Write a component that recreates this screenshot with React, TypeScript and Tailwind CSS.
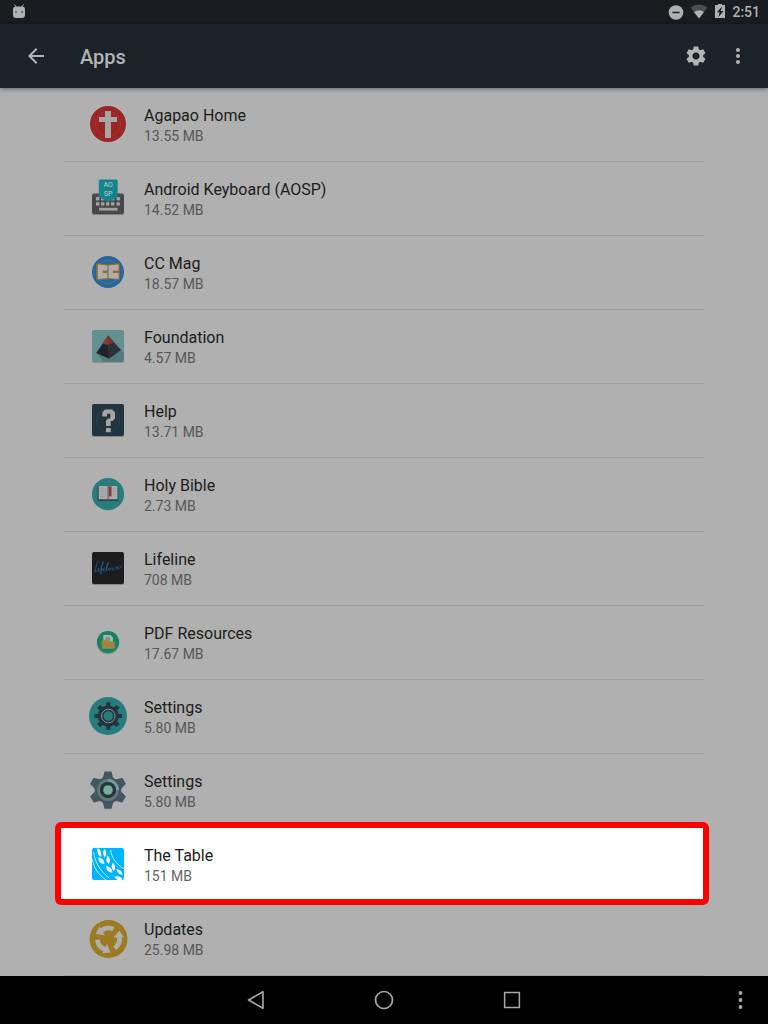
import type { ReactNode } from "react";
import { MdArrowBack, MdMoreVert, MdSettings } from "react-icons/md";

function Icon({ children }: { children: ReactNode }) {
  return (
    <svg viewBox="0 0 40 40" className="size-10 shrink-0" aria-hidden="true">
      {children}
    </svg>
  );
}

const CrossIcon = (
  <Icon>
    <circle cx="20" cy="20" r="18" fill="#992526" />
    <circle cx="20" cy="20" r="12.5" fill="none" stroke="#a53d3d" strokeWidth=".6" />
    <path d="M17 7h6v6h6v5h-6v16h-6V18h-6v-5h6z" fill="#aaa5a5" />
  </Icon>
);

const KeyboardIcon = (
  <Icon>
    <rect x="4" y="16" width="32" height="21" rx="2" fill="#7f7f7f" />
    <rect x="4" y="15.5" width="32" height="20.5" rx="2" fill="#484848" />
    {[8, 13, 18, 23, 28.5].map((x) => (
      <g key={x} fill="#a0a0a0">
        <rect x={x} y="19" width="3.4" height="3.4" />
        <rect x={x} y="24.2" width="3.4" height="3.4" />
      </g>
    ))}
    <rect x="11" y="29.8" width="18.6" height="2.8" fill="#a0a0a0" />
    <path d="M10.8 3q0-1.500 1.500-1.500h15.900q1.500 0 1.500 1.500v16L20.200 24l-9.400-5z" fill="#12848b" />
    <text x="20.2" y="8.500" textAnchor="middle" fontSize="7" fontWeight="500" fontFamily="Roboto, sans-serif" fill="#a5c3c5">AO</text>
    <text x="20.2" y="17.500" textAnchor="middle" fontSize="7" fontWeight="500" fontFamily="Roboto, sans-serif" fill="#a5c3c5">SP</text>
  </Icon>
);

const MagIcon = (
  <Icon>
    <circle cx="20" cy="20" r="16" fill="#28659a" />
    <circle cx="20" cy="20" r="11.500" fill="none" stroke="#4c7ba4" strokeWidth=".7" />
    <path d="M8.500 11l11.500 1.500L31.700 11v16.700L20 27.200 8.500 28.500z" fill="#9a6a2a" />
    <path d="M9.800 12.500l9.700 1v12.400l-9.700 1zM20.500 13.500l10-1v14.400l-10-1z" fill="#b0aeab" />
    <path d="M14.800 18.500h5v2.500h-5zM24.800 18.500h6v2.500h-6z" fill="#9a6a2a" />
    <path d="M20 13v13.500" stroke="#837d76" strokeWidth=".8" />
  </Icon>
);

const FoundationIcon = (
  <Icon>
    <rect x="4" y="5" width="32" height="32" rx="2" fill="#8c9494" />
    <rect x="4" y="4" width="32" height="32" rx="2" fill="#649092" />
    <path d="M8.500 27L16 36h18q2 0 2-2v-7l-3-3z" fill="#527b7d" />
    <path d="M20 9.500L8.300 27l13 5.800z" fill="#20232c" />
    <path d="M20 9.500L33 24l-11.700 8.800z" fill="#30303b" />
    <path d="M20 9.500L15 17.400l2.200 1.200 3.300.5z" fill="#91382e" />
    <path d="M20 9.500l.6 9.600 2.100-1 3.600-1.500z" fill="#7b3028" />
  </Icon>
);

const HelpIcon = (
  <Icon>
    <rect x="4" y="5" width="32" height="32" rx="2" fill="#858789" />
    <rect x="4" y="4" width="32" height="32" rx="2" fill="#223440" />
    <circle cx="20" cy="20.500" r="11.500" fill="none" stroke="#304650" strokeWidth=".7" />
    <path
      d="M14.300 15.500v-3l2.800-3h7l2.900 3v6l-2.500 2.500h-1.800v5H18v-5.500l2-2h2.300v-4.700h-3.200v2.700h-4.800zM18 28h4.700v4.300H18z"
      fill="#a7a6a2"
    />
  </Icon>
);

const BibleIcon = (
  <Icon>
    <circle cx="20" cy="20.500" r="16" fill="#7b9491" />
    <circle cx="20" cy="20" r="16" fill="#267d7c" />
    <rect x="9.600" y="12" width="20.700" height="15" rx=".7" fill="#344448" />
    <path d="M10.700 12h9v13.300h-9zM20.500 12h9v13.300h-9z" fill="#aaabaa" />
    <path d="M12.500 15h5.500M12.500 17.500h5.500M12.500 20h5.500M12.500 22.500h5.500M24.500 15h3.500M24.500 17.500h3.500M24.500 20h3.500" stroke="#969d9c" strokeWidth=".8" />
    <path d="M20.100 12v14" stroke="#747c7b" strokeWidth=".6" />
    <path d="M21 12.200h2.500V23l-1.200-1.200L21 23z" fill="#943a34" />
  </Icon>
);

const LifelineIcon = (
  <Icon>
    <rect x="4" y="5" width="32" height="32" rx="2" fill="#858585" />
    <rect x="4" y="4" width="32" height="32" rx="2" fill="#1c1d1f" />
    <path
      d="M10 13.500C8.500 15.500 7.500 20 7.300 24c1.700-.2 2.500-2 3.300-4-.5 2-.5 3.500.4 3.500 1 0 1.800-2 2.300-4 1.500-3 2.500-5.800 1.700-6-1.500.8-1.300 8-2.700 12.500 1-.5 1.700-3 1.500-5 1 .5 2 .4 2.800-.7.500-.8-.2-1.300-.8-.5-1 1.500-.7 3.500.5 3.200 2.200-.8 4-7 4-8.800-1.700 1-2.200 6-1.700 8.200.8.700 2-.8 2.600-2.600-.3 1.500-.3 2.600.4 2.600 1-.2 1.600-2.700 2.500-3 .8 0 0 2.600.8 2.700 1.200 0 2-2 2.800-2.500 1 .4 2 .2 2.500-.6.400-.8-.3-1-.8-.3-.9 1.300-.9 2.700.3 2.600 1.200-.2 2.300-1.200 3.900-3.300"
      fill="none"
      stroke="#24628f"
      strokeWidth=".8"
      strokeLinecap="round"
      strokeLinejoin="round"
    />
  </Icon>
);

const PdfIcon = (
  <Icon>
    <circle cx="20" cy="20.900" r="11.300" fill="#8b8c8c" />
    <circle cx="20" cy="20" r="11" fill="#148264" />
    <path d="M15.300 13h7.200l2.400 2.400V20h-9.600z" fill="#acb5b1" />
    <path d="M17.500 15h4.500v4h-4.500z" fill="#858c89" />
    <path d="M13.600 19q0-1.200 1.200-1.200h3l1.200 1.400h6.600q1.200 0 1.200 1.200v5.200q0 1.200-1.200 1.200H14.800q-1.200 0-1.200-1.200z" fill="#9f8541" />
  </Icon>
);

const SettingsRoundIcon = (
  <Icon>
    <circle cx="20" cy="20" r="19" fill="#267d7c" />
    <g fill="#24333d">
      <circle cx="20.300" cy="20" r="10.500" />
      {[0, 45, 90, 135, 180, 225, 270, 315].map((angle) => (
        <rect key={angle} x="18.200" y="6.300" width="4.200" height="6" rx=".5" transform={`rotate(${angle} 20.300 20)`} />
      ))}
    </g>
    <circle cx="20.300" cy="20" r="6.800" fill="#24333d" stroke="#899598" strokeWidth="1" />
    <circle cx="20.300" cy="20" r="4.800" fill="#267d7c" />
  </Icon>
);

const SettingsGearIcon = (
  <Icon>
    <g fill="#818688" transform="translate(0 .8)">
      {[0, 60, 120].map((angle) => (
        <path key={angle} d="M16.500 1.500h7l1.300 5.500 1.700 2v22l-1.700 2-1.300 5.500h-7L15.200 33l-1.700-2V9l1.700-2z" transform={`rotate(${angle} 20 20)`} />
      ))}
    </g>
    <g fill="#42565f">
      <circle cx="20" cy="20" r="13" />
      {[0, 60, 120].map((angle) => (
        <path key={angle} d="M16.500 1.500h7l1.300 5.500 1.700 2v22l-1.700 2-1.300 5.500h-7L15.200 33l-1.700-2V9l1.700-2z" transform={`rotate(${angle} 20 20)`} />
      ))}
    </g>
    <circle cx="20" cy="20" r="9.500" fill="none" stroke="#65767b" strokeWidth="2.800" />
    <path d="M20 10.500a9.500 9.500 0 0 1 9.500 9.500" fill="none" stroke="#72a198" strokeWidth="2.800" />
    <circle cx="20" cy="20" r="8" fill="#26353c" />
    <circle cx="20" cy="20" r="4.800" fill="#77aaa0" />
  </Icon>
);

const WheatIcon = (
  <Icon>
    <rect x="4" y="4" width="32" height="32" rx="2" fill="#00b5ff" />
    <g fill="#fff">
      <path d="M9.300 4.500c3 0 4.500 4.500 3.800 8.300C10 11.500 9 8 9.300 4.500z" />
      <path d="M16.300 5c2.300 2.500 2.700 5.500.6 8.500-2-2.500-2.300-5.500-.6-8.500z" />
      <path d="M10.300 13.500c3.700.2 6 3 6.200 6.500-3.900 0-6.200-2.800-6.200-6.500z" />
      <path d="M19.700 11.500c2.700 2.700 3 5.800.7 8.500-2.500-2.400-2.600-5.700-.7-8.500z" />
      <path d="M18 22c4 .4 6.200 3.300 6.400 6.600-4-.2-6.400-2.800-6.400-6.600z" />
      <path d="M25 18.500c2.500 2.900 2.900 5.800.9 8.500-2.700-2.400-2.700-5.500-.9-8.500z" />
      <path d="M28.500 24.800c3.900 1 5.800 3 6.200 6-3.700-.2-6-2.200-6.200-6z" />
      <path d="M26 32.800c3.700-1.300 6.700-.5 8.500 2.200-.6.700-1.500 1-2.500 1h-2.500z" />
    </g>
    <path
      d="M4.200 15C6 24 10 30.500 18 35.800M5.500 8C7 18 11.500 26.500 21 34M22.500 6C23.500 13 28 20 35.800 25"
      fill="none"
      stroke="#fff"
      strokeWidth=".7"
    />
  </Icon>
);

const UpdatesIcon = (
  <Icon>
    <circle cx="20.500" cy="21" r="19" fill="#9b7a22" />
    {[0, 120, 240].map((angle) => (
      <g key={angle} transform={`rotate(${angle} 20.500 21)`}>
        <path d="M26.600 30.200A11 11 0 0 0 31.300 19" fill="none" stroke="#b0aeaa" strokeWidth="4.800" />
        <path d="M25.500 19.800L36 19.200 31.300 12.500z" fill="#b0aeaa" />
      </g>
    ))}
  </Icon>
);

type App = { name: string; size: string; icon: ReactNode; highlighted?: boolean };

const apps: App[] = [
  { name: "Agapao Home", size: "13.55 MB", icon: CrossIcon },
  { name: "Android Keyboard (AOSP)", size: "14.52 MB", icon: KeyboardIcon },
  { name: "CC Mag", size: "18.57 MB", icon: MagIcon },
  { name: "Foundation", size: "4.57 MB", icon: FoundationIcon },
  { name: "Help", size: "13.71 MB", icon: HelpIcon },
  { name: "Holy Bible", size: "2.73 MB", icon: BibleIcon },
  { name: "Lifeline", size: "708 MB", icon: LifelineIcon },
  { name: "PDF Resources", size: "17.67 MB", icon: PdfIcon },
  { name: "Settings", size: "5.80 MB", icon: SettingsRoundIcon },
  { name: "Settings", size: "5.80 MB", icon: SettingsGearIcon },
  { name: "The Table", size: "151 MB", icon: WheatIcon, highlighted: true },
  { name: "Updates", size: "25.98 MB", icon: UpdatesIcon },
];

function AppRow({ app }: { app: App }) {
  return (
    <li className="relative border-b border-[#9f9f9f]">
      {app.highlighted && (
        <div className="absolute -top-1.5 -right-[5px] -bottom-1 -left-[9px] rounded-md border-6 border-[#ff0000] bg-white" />
      )}
      <button type="button" className="relative flex w-full items-start gap-4 px-6 pt-4 pb-[15px] text-left">
        {app.icon}
        <span className="flex flex-col pt-0.5">
          <span className="text-base leading-5 text-[#1c1c1c]">{app.name}</span>
          <span className={app.highlighted ? "text-sm leading-5 text-[#666666]" : "text-sm leading-5 text-[#575757]"}>
            {app.size}
          </span>
        </span>
      </button>
    </li>
  );
}

function StatusBar() {
  return (
    <div className="flex h-6 items-center justify-between bg-[#191d1f] px-2 text-[#b0b0b0]">
      <svg viewBox="0 0 16 16" className="ml-1 size-4" aria-hidden="true">
        <path d="M2.500.5l2 3M11.500.5l-2 3" stroke="currentColor" strokeWidth="1" />
        <path d="M1 5.500q0-3 3-3h6q3 0 3 3V11q0 3-3 3H4q-3 0-3-3z" fill="currentColor" />
        <circle cx="4" cy="8" r=".8" fill="#191d1f" />
        <circle cx="10" cy="8" r=".8" fill="#191d1f" />
      </svg>
      <div className="flex items-center gap-1">
        <svg viewBox="0 0 16 16" className="mr-0.5 size-4" aria-hidden="true">
          <circle cx="8" cy="8.500" r="7.300" fill="currentColor" />
          <path d="M4.500 8.500h7" stroke="#191d1f" strokeWidth="1.500" />
        </svg>
        <svg viewBox="0 0 18 16" className="h-4 w-[18px]" aria-hidden="true">
          <path d="M.5 3.500Q9-2.500 17.500 3.500L9 14.500z" fill="#4a4e50" />
          <path d="M4 8q5-3.500 10 0l-5 6.500z" fill="currentColor" />
        </svg>
        <svg viewBox="0 0 16 16" className="size-4" aria-hidden="true">
          <path d="M3 1h3V-.3h4V1h3v13H3z" fill="currentColor" />
          <path d="M10 2.500L5 8.300h2.500l-1 4.700L11.500 7H8.800z" fill="#191d1f" />
        </svg>
        <span className="text-sm leading-6 font-medium">2:51</span>
      </div>
    </div>
  );
}

export default function App() {
  return (
    <div className="flex min-h-screen flex-col bg-[#b0b0b0] font-[Roboto,sans-serif]">
      <StatusBar />
      <header className="relative z-10 flex h-16 items-center bg-[#1b2228] px-6 text-[#b4b4b4] shadow-[0_1px_4px_rgba(0,0,0,0.45)]">
        <button type="button" aria-label="Back">
          <MdArrowBack className="size-6" />
        </button>
        <h1 className="ml-8 flex-1 pt-0.5 text-xl font-medium">Apps</h1>
        <div className="-mr-1.5 flex gap-[18px]">
          <button type="button" aria-label="Settings">
            <MdSettings className="size-6" />
          </button>
          <button type="button" aria-label="More options">
            <MdMoreVert className="size-6" />
          </button>
        </div>
      </header>
      <main className="flex-1 px-16">
        <ul>
          {apps.map((app, index) => (
            <AppRow key={index} app={app} />
          ))}
        </ul>
      </main>
      <nav className="grid h-12 grid-cols-[1fr_auto_1fr] items-center bg-black px-4 text-[#a9a9a9]">
        <div className="col-start-2 flex gap-26">
          <button type="button" aria-label="Back">
            <svg viewBox="0 0 24 24" className="size-6" fill="none" stroke="currentColor" strokeWidth="1.600" strokeLinejoin="round">
              <path d="M4.500 12L19 3.800v16.400z" />
            </svg>
          </button>
          <button type="button" aria-label="Home">
            <svg viewBox="0 0 24 24" className="size-6" fill="none" stroke="currentColor" strokeWidth="1.700">
              <circle cx="12" cy="12" r="8.500" />
            </svg>
          </button>
          <button type="button" aria-label="Overview">
            <svg viewBox="0 0 24 24" className="size-6" fill="none" stroke="currentColor" strokeWidth="1.500" strokeLinejoin="round">
              <rect x="4.600" y="4.600" width="14.800" height="14.800" />
            </svg>
          </button>
        </div>
        <button type="button" aria-label="Menu" className="justify-self-end">
          <svg viewBox="0 0 24 24" className="size-6" fill="currentColor">
            <circle cx="12.500" cy="5" r="1.900" />
            <circle cx="12.500" cy="12" r="1.900" />
            <circle cx="12.500" cy="19" r="1.900" />
          </svg>
        </button>
      </nav>
    </div>
  );
}
